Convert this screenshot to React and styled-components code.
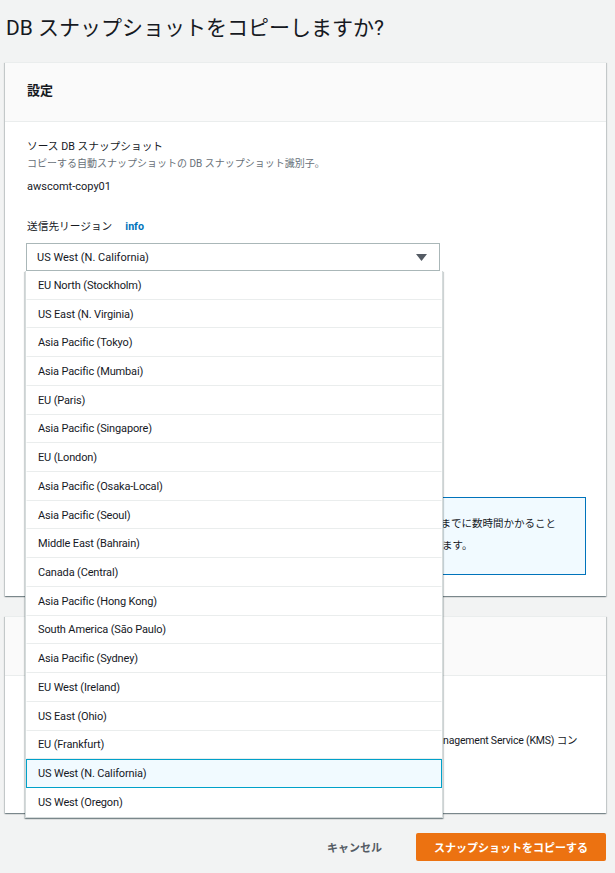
import styled, { createGlobalStyle } from 'styled-components'

const GlobalStyle = createGlobalStyle`
    body {
        margin: 0;
        background: #f2f3f3;
        font-family: Roboto, "Noto Sans CJK JP", sans-serif;
        color: #16191f;
    }
`;

const REGIONS = [
    'EU North (Stockholm)',
    'US East (N. Virginia)',
    'Asia Pacific (Tokyo)',
    'Asia Pacific (Mumbai)',
    'EU (Paris)',
    'Asia Pacific (Singapore)',
    'EU (London)',
    'Asia Pacific (Osaka-Local)',
    'Asia Pacific (Seoul)',
    'Middle East (Bahrain)',
    'Canada (Central)',
    'Asia Pacific (Hong Kong)',
    'South America (São Paulo)',
    'Asia Pacific (Sydney)',
    'EU West (Ireland)',
    'US East (Ohio)',
    'EU (Frankfurt)',
    'US West (N. California)',
    'US West (Oregon)',
];

const Page = styled.div`
    padding: 0 9px 10px 5px;
`;

const Title = styled.h1`
    margin: 0 0 20px 1px;
    padding-top: 14px;
    font-size: 21px;
    font-weight: 400;
    line-height: 28px;
`;

const Card = styled.section`
    background: #fff;
    border-top: 1px solid #eaeded;
    box-shadow: 0 1px 1px 0 rgba(0,28,36,.3), 1px 1px 1px 0 rgba(0,28,36,.15), -1px 1px 1px 0 rgba(0,28,36,.15);
    margin-bottom: 20px;
`;

const CardHeader = styled.div`
    height: 53px;
    display: flex;
    align-items: center;
    padding: 0 0 5px 22px;
    background: #fafafa;
    border-bottom: 1px solid #eaeded;
    font-size: 13px;
    font-weight: 700;
`;

const CardBody = styled.div`
    padding: 16px 20px ${p => p.$bottom || 21}px 21px;
`;

const Label = styled.div`
    font-size: 10.7px;
    line-height: 18px;
    margin-top: ${p => p.$top || 0}px;
    padding-left: 1px;
    display: flex;
    align-items: center;
`;

const InfoLink = styled.span`
    color: #0073bb;
    font-weight: 700;
    margin-left: 13px;
`;

const Desc = styled.div`
    font-size: 10px;
    line-height: 16px;
    color: #687078;
    padding-left: 1px;
`;

const Value = styled.div`
    font-size: 11px;
    line-height: 16px;
    margin-top: 7px;
    padding-left: 1px;
`;

const SelectWrap = styled.div`
    position: relative;
    width: 414px;
    margin-top: ${p => p.$top || 7}px;
`;

const SelectBox = styled.div`
    height: 28px;
    box-sizing: border-box;
    border: 1px solid #aab7b8;
    display: flex;
    align-items: center;
    justify-content: space-between;
    padding: 0 12px 0 10px;
    font-size: 11px;
    background: #fff;
`;

const Input = styled.div`
    height: 28px;
    box-sizing: border-box;
    width: 414px;
    border: 1px solid #aab7b8;
    margin-top: 6px;
`;

const Options = styled.ul`
    position: absolute;
    top: 100%;
    left: -1px;
    width: 416px;
    margin: 0;
    padding: 0;
    list-style: none;
    background: #fff;
    border: 1px solid #d5dbdb;
    border-top: none;
    box-shadow: 0 1px 1px 0 rgba(0,28,36,.3), 1px 1px 1px 0 rgba(0,28,36,.15), -1px 1px 1px 0 rgba(0,28,36,.15);
    z-index: 10;
`;

const Option = styled.li`
    height: 28.72px;
    box-sizing: border-box;
    display: flex;
    align-items: center;
    padding-left: 11px;
    font-size: 11px;
    letter-spacing: -0.15px;
    border-top: 1px solid ${p => p.$selected ? '#00a1c9' : 'transparent'};
    border-bottom: 1px solid ${p => p.$selected ? '#00a1c9' : '#eaeded'};
    border-left: 1px solid ${p => p.$selected ? '#00a1c9' : 'transparent'};
    border-right: 1px solid ${p => p.$selected ? '#00a1c9' : 'transparent'};
    background: ${p => p.$selected ? '#f1faff' : '#fff'};
    &:last-child { border-bottom-color: transparent; }
`;

const CheckRow = styled.div`
    display: flex;
    align-items: center;
    gap: 8px;
    font-size: 11px;
    line-height: 18px;
    margin-top: ${p => p.$top ?? 22}px;
`;

const Checkbox = styled.span`
    width: 12px;
    height: 12px;
    border: 1px solid #aab7b8;
    border-radius: 2px;
    box-sizing: border-box;
`;

const InfoBox = styled.div`
    margin-top: 18px;
    border: 1px solid #0073bb;
    background: #f1faff;
    padding: 15px 20px 17px 12px;
    display: flex;
    gap: 9px;
`;

const InfoText = styled.div`
    font-size: 10.5px;
    line-height: 22px;
    white-space: nowrap;
`;

const BodyLine = styled.div`
    font-size: 10.5px;
    letter-spacing: -0.2px;
    line-height: 17px;
    white-space: nowrap;
    color: #16191f;
    padding-left: 1px;
`;

const Footer = styled.div`
    display: flex;
    justify-content: flex-end;
    align-items: center;
`;

const CancelButton = styled.button`
    border: none;
    background: transparent;
    color: #545b64;
    font: inherit;
    font-size: 11px;
    font-weight: 700;
    padding: 0 20px;
    height: 28px;
    margin-right: 14px;
`;

const PrimaryButton = styled.button`
    border: none;
    background: #ec7211;
    color: #fff;
    font: inherit;
    font-size: 11px;
    font-weight: 700;
    width: 190px;
    height: 28px;
    border-radius: 2px;
`;

const Caret = () => (
    <svg width="11" height="7" viewBox="0 0 11 7">
        <path d="M0 0 H11 L5.5 7 Z" fill="#545b64" />
    </svg>
);

const InfoIcon = () => (
    <svg width="16" height="16" viewBox="0 0 16 16" style={{ marginTop: 3 }}>
        <circle cx="8" cy="8" r="7" fill="none" stroke="#0073bb" strokeWidth="1.5" />
        <path d="M8 7 V12 M8 4 V5.5" stroke="#0073bb" strokeWidth="1.6" />
    </svg>
);

const App = () => {
    const selected = 'US West (N. California)';
    return (
        <Page>
            <GlobalStyle />
            <Title>DB スナップショットをコピーしますか?</Title>
            <Card>
                <CardHeader>設定</CardHeader>
                <CardBody>
                    <Label>ソース DB スナップショット</Label>
                    <Desc>コピーする自動スナップショットの DB スナップショット識別子。</Desc>
                    <Value>awscomt-copy01</Value>
                    <Label $top={23}>送信先リージョン<InfoLink>info</InfoLink></Label>
                    <SelectWrap>
                        <SelectBox>
                            <span>{selected}</span>
                            <Caret />
                        </SelectBox>
                        <Options>
                            {REGIONS.map((r) => (
                                <Option key={r} $selected={r === selected}>{r}</Option>
                            ))}
                        </Options>
                    </SelectWrap>
                    <Label $top={24}>新しい DB スナップショット識別子</Label>
                    <Desc>DB スナップショットのコピーの識別子。</Desc>
                    <Input />
                    <Label $top={24}>ターゲットオプショングループ</Label>
                    <SelectWrap $top={6}>
                        <SelectBox>
                            <span>default:mysql-5-7</span>
                            <Caret />
                        </SelectBox>
                    </SelectWrap>
                    <CheckRow><Checkbox />タグのコピー</CheckRow>
                    <InfoBox>
                        <InfoIcon />
                        <div>
                            <InfoText>スナップショットのサイズとリージョン間の距離によっては、コピーが完了するまでに数時間かかること</InfoText>
                            <InfoText>コピー中の各スナップショットは、コピーの完了までは使用できない場合があります。</InfoText>
                        </div>
                    </InfoBox>
                </CardBody>
            </Card>
            <Card>
                <CardHeader>暗号化</CardHeader>
                <CardBody $bottom={47}>
                    <Label>暗号化</Label>
                    <CheckRow $top={4}><Checkbox />暗号化を有効化</CheckRow>
                    <BodyLine>データの暗号化に使用するマスターキーを選択します。このマスターキーは、AWS Key Management Service (KMS) コン</BodyLine>
                    <BodyLine>ソールで作成できます。</BodyLine>
                </CardBody>
            </Card>
            <Footer>
                <CancelButton>キャンセル</CancelButton>
                <PrimaryButton>スナップショットをコピーする</PrimaryButton>
            </Footer>
        </Page>
    )
}

export default App
